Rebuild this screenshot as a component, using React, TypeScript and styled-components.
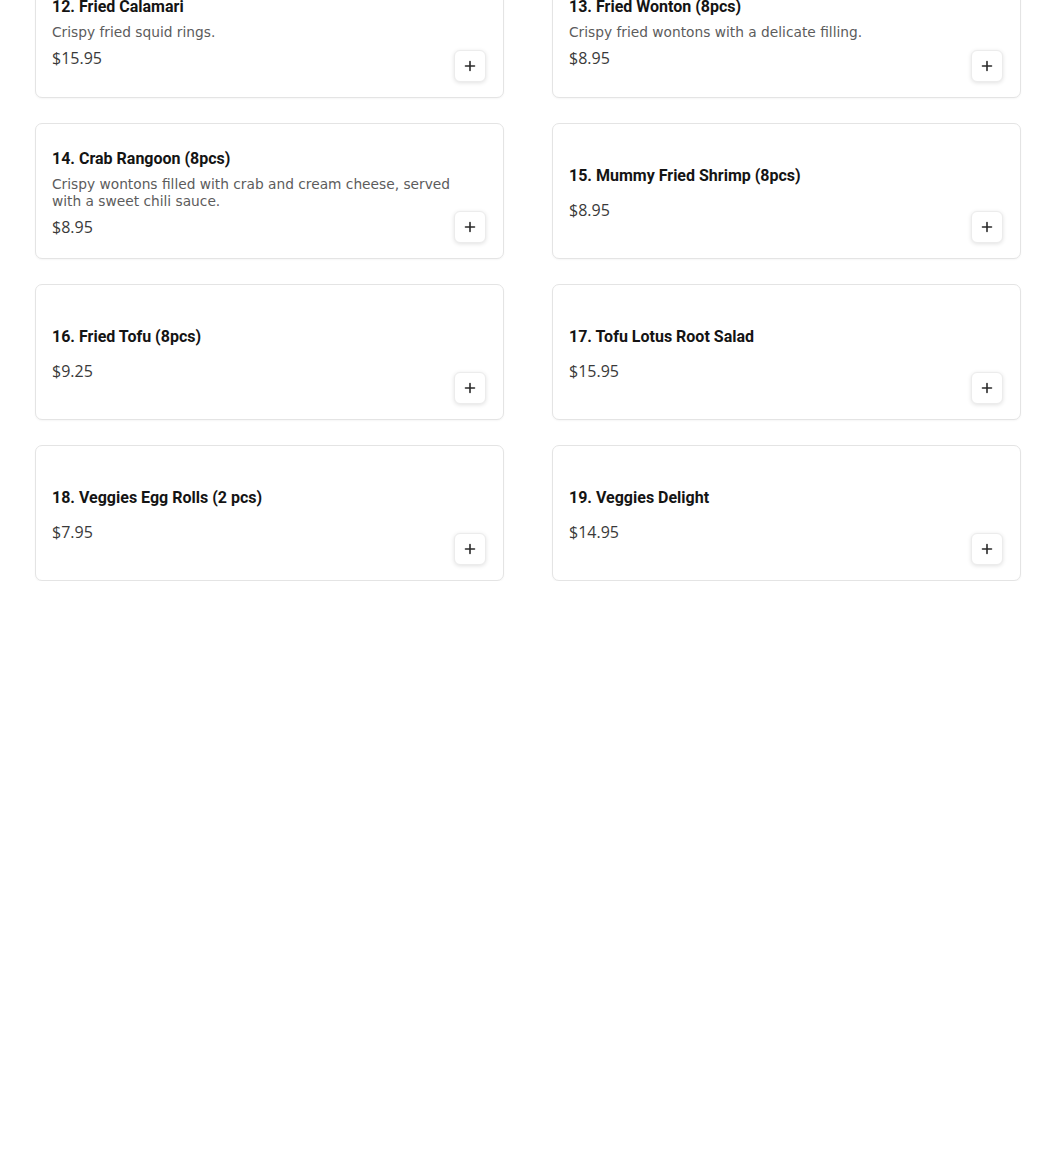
import styled, { createGlobalStyle } from "styled-components";

const Global = createGlobalStyle`
    html, body {
        margin: 0;
        padding: 0;
        background: #ffffff;
    }
`

const Page = styled.div`
    padding: 0 29px 0 35px;
    margin-top: -38px;
`

const Grid = styled.div`
    display: grid;
    grid-template-columns: 469px 469px;
    column-gap: 48px;
    row-gap: 25px;
`

const Card = styled.div`
    box-sizing: border-box;
    height: 136px;
    display: flex;
    align-items: center;
    padding: 19px 17px 15px 16px;
    background: #fff;
    border: 1px solid #e4e4e4;
    border-radius: 7px;
    box-shadow: 0 1px 2px rgba(0, 0, 0, 0.04);
`

const Info = styled.div`
    flex: 1;
    min-width: 0;
    display: flex;
    flex-direction: column;
`

const Title = styled.h3`
    margin: 0;
    font-family: Roboto, "Liberation Sans", sans-serif;
    font-weight: 700;
    font-size: 16px;
    line-height: 20px;
    color: #141414;
`

const Desc = styled.p`
    margin: 7px 0 7px;
    font-family: "DejaVu Sans", sans-serif;
    font-size: 13.75px;
    line-height: 17px;
    color: #5c5c5c;
    max-width: 410px;
`

const Price = styled.span`
    font-family: "Open Sans", sans-serif;
    font-size: 16px;
    line-height: 20px;
    color: #3a3a3a;
`

const AddButton = styled.button`
    align-self: flex-end;
    flex: none;
    width: 32px;
    height: 32px;
    padding: 0;
    display: flex;
    align-items: center;
    justify-content: center;
    background: #fff;
    border: 1px solid #ececec;
    border-radius: 6px;
    box-shadow: 0 1px 4px rgba(0, 0, 0, 0.12);
    cursor: pointer;
`

interface Item {
    name: string,
    desc?: string,
    price: string
}

const items: Item[] = [
    { name: "12. Fried Calamari", desc: "Crispy fried squid rings.", price: "$15.95" },
    { name: "13. Fried Wonton (8pcs)", desc: "Crispy fried wontons with a delicate filling.", price: "$8.95" },
    { name: "14. Crab Rangoon (8pcs)", desc: "Crispy wontons filled with crab and cream cheese, served with a sweet chili sauce.", price: "$8.95" },
    { name: "15. Mummy Fried Shrimp (8pcs)", price: "$8.95" },
    { name: "16. Fried Tofu (8pcs)", price: "$9.25" },
    { name: "17. Tofu Lotus Root Salad", price: "$15.95" },
    { name: "18. Veggies Egg Rolls (2 pcs)", price: "$7.95" },
    { name: "19. Veggies Delight", price: "$14.95" },
]

const Plus = () => (
    <svg width="12" height="12" viewBox="0 0 12 12">
        <path d="M6 1.5v9M1.5 6h9" stroke="#2a2a2a" strokeWidth="1.6" strokeLinecap="round" />
    </svg>
)

export default function App() {
    return (
        <>
            <Global />
            <Page>
                <Grid>
                    {items.map((it) => (
                        <Card key={it.name}>
                            <Info>
                                <Title>{it.name}</Title>
                                <Desc>{it.desc ?? ""}</Desc>
                                <Price>{it.price}</Price>
                            </Info>
                            <AddButton aria-label="Add"><Plus /></AddButton>
                        </Card>
                    ))}
                </Grid>
            </Page>
        </>
    )
}
